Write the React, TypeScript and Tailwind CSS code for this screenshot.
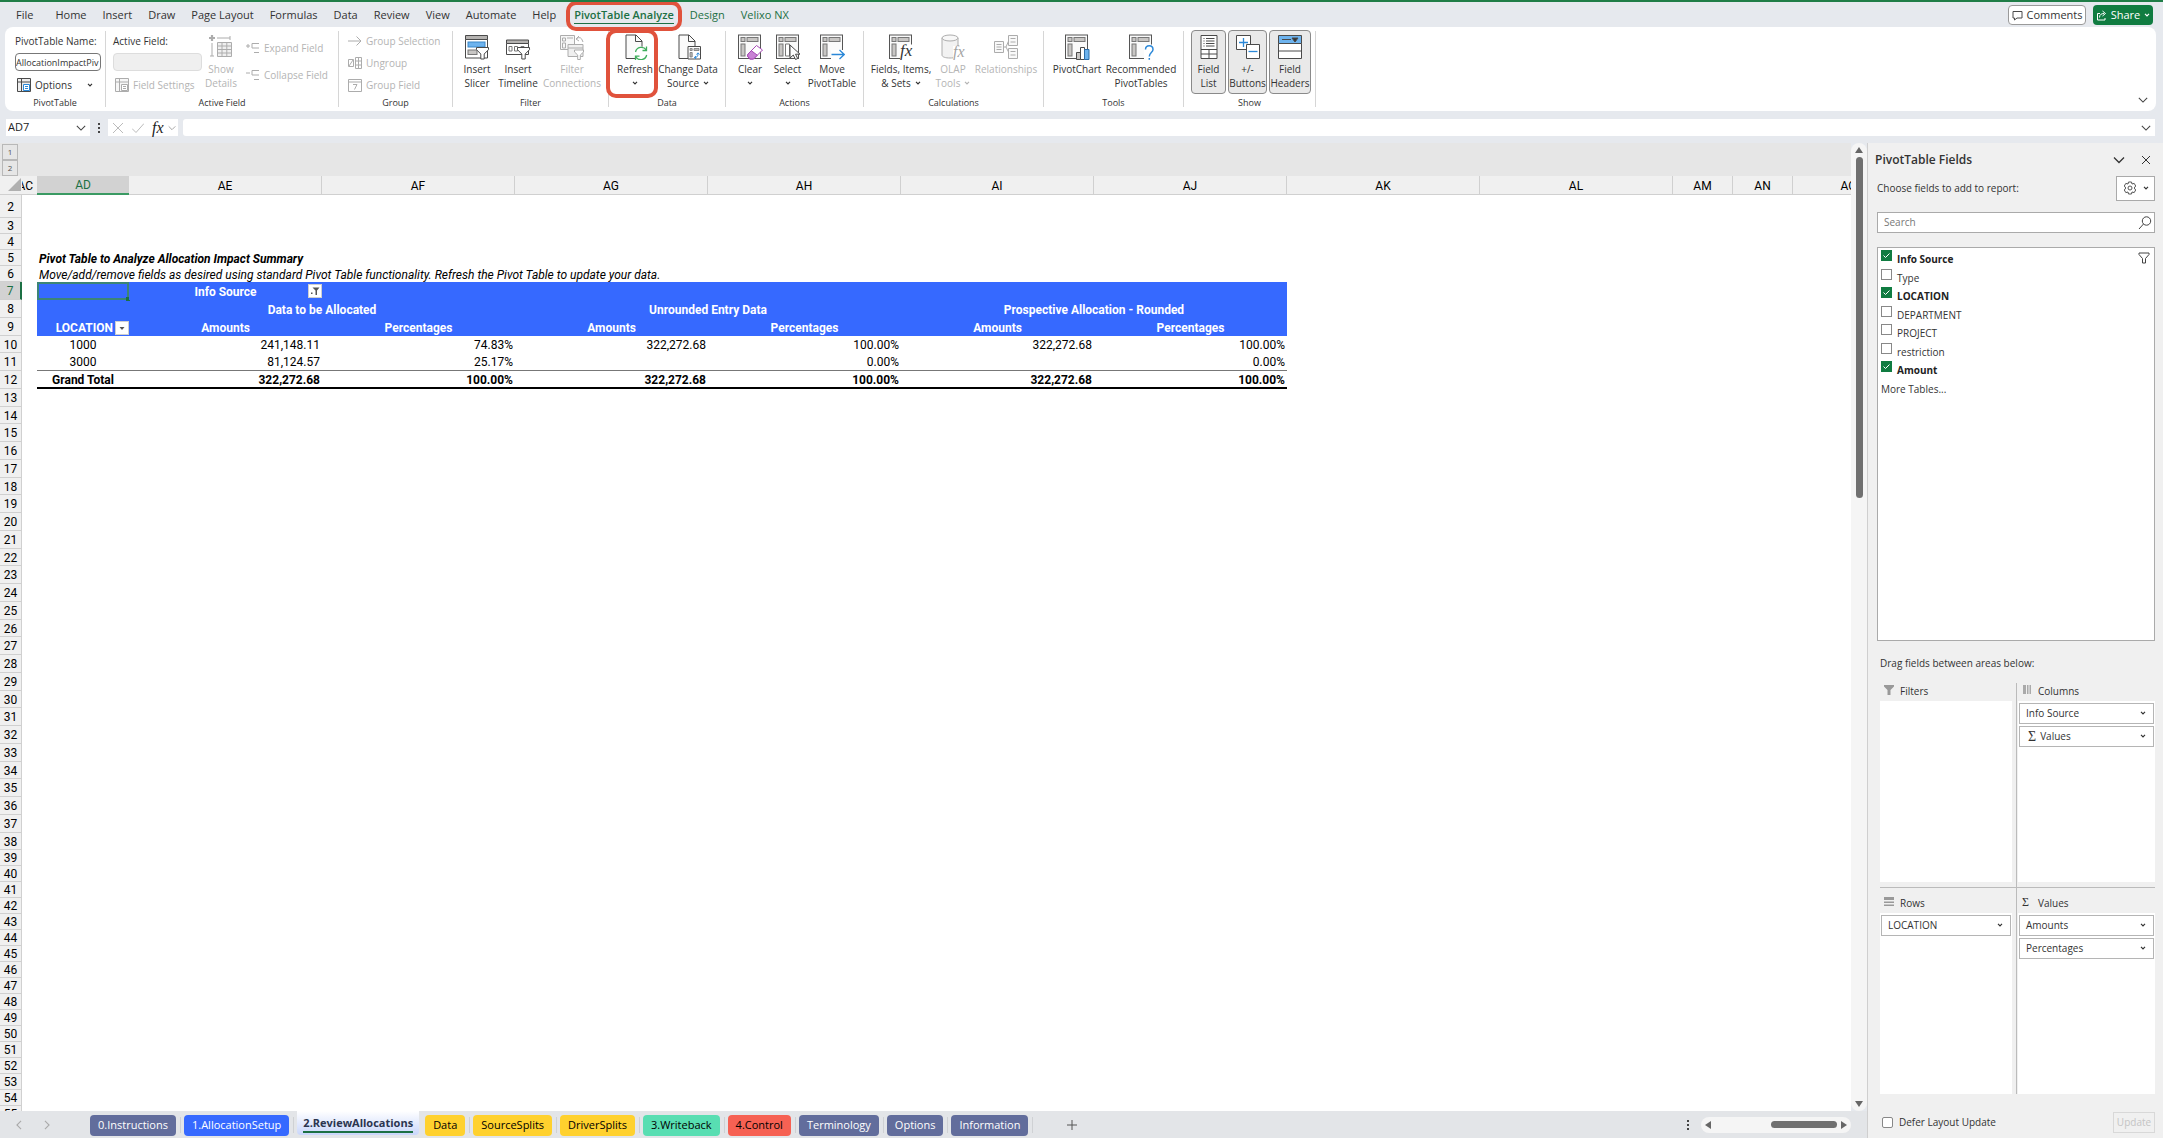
import type { ReactNode } from "react";

const UI = "font-['Open_Sans','Noto_Sans',sans-serif]";
const SHEET = "font-['Roboto','Liberation_Sans',sans-serif]";

function Chevron({ className = "size-2.5" }: { className?: string }) {
  return (
    <svg viewBox="0 0 12 12" className={`shrink-0 ${className}`} fill="none" stroke="currentColor" strokeWidth="1.3" aria-hidden="true">
      <path d="M1 3.5 6 8.5l5-5" />
    </svg>
  );
}

function SmallChevron() {
  return (
    <svg viewBox="0 0 6 4" className="h-1 w-1.5 shrink-0" fill="none" stroke="currentColor" strokeWidth="1.2" aria-hidden="true">
      <path d="M1 .8 3 2.8 5 .8" />
    </svg>
  );
}

function Icon({ children, className = "h-[26px] w-[26px]", box = "0 0 26 26" }: { children: ReactNode; className?: string; box?: string }) {
  return (
    <svg viewBox={box} className={`shrink-0 ${className}`} fill="none" stroke="#4a4a4a" strokeWidth="1" aria-hidden="true">
      {children}
    </svg>
  );
}

const PivotGrid = () => (
  <>
    <rect x="1.5" y="1" width="22" height="23.5" fill="#fafafa" stroke="#555" />
    <rect x="4" y="3.5" width="4" height="4" fill="#c8c6c4" stroke="#777" />
    <rect x="10" y="3.5" width="11" height="4" fill="#c8c6c4" stroke="#777" />
    <rect x="4" y="10" width="4" height="12" fill="#c8c6c4" stroke="#777" />
  </>
);

const Page = () => (
  <>
    <path d="M4 1h10l6 6v17.5H4z" fill="#fafafa" />
    <path d="M13.5 1v6.5H20" />
  </>
);

const Funnel = () => <path d="M12.500 13.500h12v2.200l-4.300 4.300v5h-3.400v-5l-4.300-4.300z" fill="#fff" />;

const Fx = ({ x, y, size = 12, fill = "#333" }: { x: number; y: number; size?: number; fill?: string }) => (
  <text x={x} y={y} fontSize={size} fontStyle="italic" fontFamily="Liberation Serif, serif" fill={fill} stroke="none">
    fx
  </text>
);

const icons: Record<string, ReactNode> = {
  slicer: (
    <Icon>
      <path d="M1.500 1.500h22v4h-22z" fill="#b5b3b1" />
      <path d="M1.500 5.500h22v18.500h-22z" fill="#fff" />
      <rect x="4" y="8" width="17" height="5" fill="#6db3ee" stroke="#3b87c8" />
      <rect x="4" y="16" width="9" height="4.500" fill="#c8c6c4" stroke="#777" />
      <Funnel />
    </Icon>
  ),
  timeline: (
    <Icon>
      <path d="M1.500 6h22v3.500h-22z" fill="#b5b3b1" />
      <path d="M1.500 9.500h22v11h-22z" fill="#fff" />
      <path d="M4 12.500h3v4.500H4zM9.500 12.500h3v4.500h-3zM16 12.500h3v4h-3z" stroke="#777" />
      <Funnel />
    </Icon>
  ),
  connections: (
    <Icon className="h-[26px] w-[26px] opacity-45">
      <path d="M1.500 1.500h14v14h-14z" fill="#eee" />
      <path d="M3.500 4h3v3h-3zM8 4h6M3.500 9h3v5h-3z" />
      <path d="M17 5q5-4 7 3M20 2l-3 3 3 2" />
      <path d="M9 10.500h15v12H9z" fill="#ddd" />
      <path d="M9 14h15" />
      <path d="M15.500 16h9v2l-3.200 3v4.500h-2.600V21l-3.200-3z" fill="#fff" />
    </Icon>
  ),
  refresh: (
    <Icon>
      <Page />
      <circle cx="19" cy="19.500" r="7" fill="#fff" stroke="none" />
      <path d="M13.500 18a6 6 0 0 1 10.800-2M24.500 12.500V16.500h-4M24.700 21a6 6 0 0 1-10.800 2M13.500 26v-3.800h4" stroke="#3fae5c" strokeWidth="1.300" />
    </Icon>
  ),
  source: (
    <Icon>
      <Page />
      <path d="M13 12.500h12.500V25H13z" fill="#fff" />
      <path d="M15 14.500h2.200v2H15zM19 14.500h5v2h-5zM15 18.500h2.200V23H15z" fill="#bbb" stroke="#777" strokeWidth=".8" />
      <path d="M19.500 23.500c2.500 0 3.500-1 3.500-4M21.500 20.500l1.500-1.700 1.500 1.700M21 22l-1.700 1.500 1.700 1.300" stroke="#2b88d8" />
    </Icon>
  ),
  clear: (
    <Icon>
      <PivotGrid />
      <path d="m11 20 8.500-8.500 6 4.500-9 9H12.500L10.500 22z" fill="#fff" stroke="#a646b6" />
      <path d="m11 20 3.300-3.300 6 4.500-3.800 3.800H13L10.500 22z" fill="#c883d4" stroke="#a646b6" />
    </Icon>
  ),
  select: (
    <Icon>
      <PivotGrid />
      <path d="M10.500 10h4v12h-4z" fill="#fff" stroke="#777" />
      <path d="M15 11v13l3.300-3 2.200 4.500 2.200-1-2.200-4.300H25z" fill="#fff" />
    </Icon>
  ),
  move: (
    <Icon>
      <PivotGrid />
      <path d="M12 16h14v9.500H12z" fill="#fff" stroke="none" />
      <path d="M12.500 20.500H25M20.500 16l4.700 4.500-4.700 4.500" stroke="#2b88d8" strokeWidth="1.300" />
    </Icon>
  ),
  fields: (
    <Icon>
      <PivotGrid />
      <path d="M12 10.500h14V26H12z" fill="#fff" stroke="none" />
      <Fx x={12} y={22} size={17} />
    </Icon>
  ),
  olap: (
    <Icon className="h-[26px] w-[26px] opacity-45">
      <path d="M2 4v17c0 2 3.500 3 8 3s8-1 8-3V4" fill="#e3e3e3" />
      <ellipse cx="10" cy="4" rx="8" ry="3" fill="#f0f0f0" />
      <path d="M13 12h13v14H13z" fill="#fff" stroke="none" />
      <Fx x={13} y={23} size={16} />
    </Icon>
  ),
  relations: (
    <Icon className="h-[26px] w-[26px] opacity-45">
      <path d="M10 13h3l3-7M13 13l3 6" />
      <path d="M1.500 7.500h9v11h-9zM15.500 1.500h9v10h-9zM15.500 14.500h9v10h-9z" fill="#f2f2f2" />
      <path d="M3.500 10.500h5M3.500 13h5M3.500 15.500h5M17.500 4.500h5M17.500 8h5M17.500 17.500h5M17.500 21h5" />
    </Icon>
  ),
  chart: (
    <Icon>
      <PivotGrid />
      <path d="M12.500 18.500h4v7h-4z" fill="#c8c6c4" />
      <path d="M16.500 13.500h4v12h-4z" fill="#fff" />
      <path d="M20.500 15.500h4.500v10h-4.500z" fill="#6db3ee" stroke="#2b6ca8" />
    </Icon>
  ),
  recommended: (
    <Icon>
      <PivotGrid />
      <path d="M16 10.500h10V26H16z" fill="#fff" stroke="none" />
      <path d="M17.500 15.500c0-5 7.500-5 7.500 0 0 3-3.700 3.200-3.700 7M21.300 24v1.800" stroke="#2b88d8" strokeWidth="1.500" />
    </Icon>
  ),
  fieldList: (
    <Icon>
      <path d="M5 1.500h16v23H5z" fill="#fff" />
      <path d="M5 15.500h16M5 20h16M13 15.500v9" />
      <path d="M7.500 4.500h1M10 4.500h8.500M7.500 7h1M10 7h8.500M7.500 9.500h1M10 9.500h8.500M7.500 12h1M10 12h8.500" />
    </Icon>
  ),
  plusMinus: (
    <Icon>
      <path d="M1.500 1.500h14v14h-14z" fill="#fff" />
      <path d="M8.500 4v9M4 8.500h9" stroke="#2b88d8" strokeWidth="1.300" />
      <path d="M11.500 10.500h13v14h-13z" fill="#fff" />
      <path d="M13.500 17.500h9" stroke="#2b88d8" strokeWidth="1.300" />
    </Icon>
  ),
  headers: (
    <Icon>
      <path d="M1.500 1.500h23v8h-23z" fill="#6db3ee" />
      <path d="M1.500 9.500h23v15h-23zM1.500 17h23" fill="#fff" />
      <path d="M5 5.500h9" />
      <path d="m15 4 3 4 3-4z" fill="#333" />
    </Icon>
  ),
  details: (
    <Icon className="h-[26px] w-[26px] opacity-45">
      <path d="M4 1v6M1 4h6" strokeWidth="2.200" />
      <path d="M9 4h13M22 2v4M4 9v13M2 22h4" />
      <path d="M9.500 8.500h14v14h-14z" fill="#ddd" />
      <path d="M9.500 12h14M9.500 15.500h14M9.500 19h14M14 8.500v14M18.800 8.500v14" />
    </Icon>
  ),
};

type BigProps = { icon: string; lines: string[]; width: string; disabled?: boolean; drop?: boolean; pressed?: boolean };

function BigButton({ icon, lines, width, disabled, drop, pressed }: BigProps) {
  return (
    <button
      type="button"
      disabled={disabled}
      aria-pressed={pressed}
      className={`flex h-16 shrink-0 flex-col items-center whitespace-nowrap text-[10px] leading-[14px] ${width} ${disabled ? "text-[#b4b4b4]" : "text-[#333]"} ${pressed ? "rounded-[4px] border border-[#8a8a8a] bg-[#e9e9e9] pt-[3px]" : "pt-1"}`}
    >
      {icons[icon]}
      <span className="mt-0.5">{lines[0]}</span>
      <span className="flex h-3.5 items-center gap-1">
        {lines[1]}
        {drop && <SmallChevron />}
      </span>
    </button>
  );
}

function Group({ label, width, children }: { label: string; width: string; children: ReactNode }) {
  return (
    <section aria-label={label} className={`my-1 flex shrink-0 flex-col border-r border-[#d6d6d6] ${width}`}>
      <div className="-mt-px flex h-[68px] shrink-0 items-start">{children}</div>
      <h2 className="text-center text-[9px] leading-[10px] text-[#333]">{label}</h2>
    </section>
  );
}

function SmallButton({ icon, children }: { icon: ReactNode; children: ReactNode }) {
  return (
    <button type="button" disabled className="flex h-[22px] items-center gap-1 text-[10px] whitespace-nowrap text-[#b4b4b4]">
      {icon}
      {children}
    </button>
  );
}

const settingsIcon = (faded: boolean) => (
  <Icon box="0 0 14 14" className={faded ? "size-3.5 opacity-45" : "size-3.5"}>
    <path d="M.5.5h13v13H.5z" fill="#eee" />
    <path d="M.5 4h13M4.500.5v13" />
    <path d="M6.500 6.500h6v6h-6z" fill="#fff" stroke={faded ? "#4a4a4a" : "#2b88d8"} />
    <path d="M8 8.500h3M8 10.500h3" stroke={faded ? "#4a4a4a" : "#2b88d8"} />
  </Icon>
);

const outlineIcon = (plus: boolean) => (
  <Icon box="0 0 14 12" className="h-3 w-3.5 opacity-45">
    <path d={plus ? "M0 4h4M2 2v4" : "M0 4h4"} />
    <path d="M6 1.500h7M8 6h5M8 10.500h5M6 1.500v4.500h2" />
  </Icon>
);

const menus = ["Home", "Insert", "Draw", "Page Layout", "Formulas", "Data", "Review", "View", "Automate", "Help"];

function MenuBar() {
  return (
    <nav aria-label="Ribbon tabs" className="flex h-[25px] items-center pt-px pr-2.5 pl-4 text-[11px] text-[#333]">
      <button type="button" className="mr-[22px]">File</button>
      <div className="flex gap-4">
        {menus.map((m) => (
          <button key={m} type="button" className="whitespace-nowrap">
            {m}
          </button>
        ))}
        <button type="button" className="relative ml-0.5 font-semibold whitespace-nowrap text-[#1c7044]">
          PivotTable Analyze
          <span className="absolute inset-x-0 -bottom-px h-px bg-[#1c7044]" />
          <span className="absolute -inset-x-2 -top-1.5 -bottom-2 z-10 rounded-[10px] border-4 border-[#e0523c]" />
        </button>
        <button type="button" className="text-[#1c7044]">Design</button>
        <button type="button" className="whitespace-nowrap text-[#1c7044]">Velixo NX</button>
      </div>
      <button type="button" className="ml-auto flex h-5 w-[78px] items-center justify-center gap-1 rounded-[4px] border border-[#9a9a9a] bg-white">
        <Icon box="0 0 11 11" className="size-[11px]">
          <path d="M1 1.500h9v6.500H5L2.500 10V8H1z" />
        </Icon>
        Comments
      </button>
      <button type="button" className="ml-[7px] flex h-5 w-[60px] items-center justify-center gap-1 rounded-[4px] bg-[#107c41] text-white">
        <svg viewBox="0 0 11 11" className="size-[11px]" fill="none" stroke="currentColor" aria-hidden="true">
          <path d="M4 3.500H1.500v6.500h7.500V8M3.500 7.500c0-3 2-4 4.500-4M6.500 1l3 2.500-3 2.500" />
        </svg>
        Share
        <SmallChevron />
      </button>
    </nav>
  );
}

function Ribbon() {
  return (
    <div className="mr-[7px] ml-[5px] flex h-[84px] rounded-lg bg-white">
      <Group label="PivotTable" width="w-[101px]">
        <div className="flex w-24 flex-col pl-2.5 text-[10px] text-[#333]">
          <label htmlFor="pt-name" className="mt-1 h-[19px] leading-[15px] whitespace-nowrap">PivotTable Name:</label>
          <input id="pt-name" defaultValue="AllocationImpactPiv" className="h-[18px] w-[86px] rounded-[4px] border border-[#777] bg-white text-[9px]" />
          <button type="button" className="mt-1 flex h-5 items-center gap-1 pl-0.5">
            {settingsIcon(false)}
            Options
            <span className="ml-auto pr-2"><SmallChevron /></span>
          </button>
        </div>
      </Group>
      <Group label="Active Field" width="w-[233px]">
        <div className="flex w-24 flex-col pl-[7px] text-[10px] text-[#333]">
          <label htmlFor="active-field" className="mt-1 h-[19px] leading-[15px]">Active Field:</label>
          <input id="active-field" disabled className="h-[18px] w-[89px] rounded-[4px] border border-[#ddd] bg-[#efefef]" />
          <div className="mt-[3px] pl-0.5">
            <SmallButton icon={settingsIcon(true)}>Field Settings</SmallButton>
          </div>
        </div>
        <BigButton icon="details" lines={["Show", "Details"]} width="w-[38px]" disabled />
        <div className="flex flex-col gap-[5px] pt-[7px] pl-1.5">
          <SmallButton icon={outlineIcon(true)}>Expand Field</SmallButton>
          <SmallButton icon={outlineIcon(false)}>Collapse Field</SmallButton>
        </div>
      </Group>
      <Group label="Group" width="w-[114px]">
        <div className="flex flex-col pl-[9px]">
          <SmallButton icon={<Icon box="0 0 14 14" className="size-3.5 opacity-45"><path d="M0 7h13M8.500 2.500 13 7l-4.500 4.500" /></Icon>}>Group Selection</SmallButton>
          <SmallButton icon={<Icon box="0 0 14 14" className="size-3.5 opacity-45"><path d="M.5 3.500h5v7h-5zM7.500 1.500h6v11h-6zM7.500 5h6M7.500 9h6M10.500 1.500v11M1 10l4-6" /></Icon>}>Ungroup</SmallButton>
          <SmallButton icon={<Icon box="0 0 14 14" className="size-3.5 opacity-45"><path d="M.5 1.500h13v12H.5zM.5 4h13" /><path d="M5 6.500h4L6.500 11.500" /></Icon>}>Group Field</SmallButton>
        </div>
      </Group>
      <Group label="Filter" width="w-[156px]">
        <div className="flex pl-[3px]">
          <BigButton icon="slicer" lines={["Insert", "Slicer"]} width="w-[42px]" />
          <BigButton icon="timeline" lines={["Insert", "Timeline"]} width="w-[40px]" />
          <BigButton icon="connections" lines={["Filter", "Connections"]} width="w-[68px]" disabled />
        </div>
      </Group>
      <Group label="Data" width="w-[117px]">
        <div className="flex pl-1.5">
          <div className="relative">
            <BigButton icon="refresh" lines={["Refresh", ""]} width="w-[40px]" drop />
            <span className="pointer-events-none absolute -top-px -right-[3px] -bottom-1 -left-[9px] z-10 rounded-[10px] border-4 border-[#e0523c]" />
          </div>
          <BigButton icon="source" lines={["Change Data", "Source"]} width="w-[66px]" drop />
        </div>
      </Group>
      <Group label="Actions" width="w-[138px]">
        <div className="flex pl-1.5">
          <BigButton icon="clear" lines={["Clear", ""]} width="w-[36px]" drop />
          <BigButton icon="select" lines={["Select", ""]} width="w-[39px]" drop />
          <BigButton icon="move" lines={["Move", "PivotTable"]} width="w-[50px]" />
        </div>
      </Group>
      <Group label="Calculations" width="w-[180px]">
        <div className="flex pl-[5px]">
          <BigButton icon="fields" lines={["Fields, Items,", "& Sets"]} width="w-[64px]" drop />
          <BigButton icon="olap" lines={["OLAP", "Tools"]} width="w-[40px]" disabled drop />
          <BigButton icon="relations" lines={["Relationships", ""]} width="w-[66px]" disabled />
        </div>
      </Group>
      <Group label="Tools" width="w-[140px]">
        <div className="flex pl-[9px]">
          <BigButton icon="chart" lines={["PivotChart", ""]} width="w-[48px]" />
          <BigButton icon="recommended" lines={["Recommended", "PivotTables"]} width="w-[80px]" />
        </div>
      </Group>
      <Group label="Show" width="w-[132px]">
        <div className="flex gap-0.5 pl-[7px]">
          <BigButton icon="fieldList" lines={["Field", "List"]} width="w-[35px]" pressed />
          <BigButton icon="plusMinus" lines={["+/-", "Buttons"]} width="w-[39px]" pressed />
          <BigButton icon="headers" lines={["Field", "Headers"]} width="w-[42px]" pressed />
        </div>
      </Group>
      <button type="button" aria-label="Collapse ribbon" className="mt-auto mr-2 mb-1.5 ml-auto text-[#444]">
        <Chevron />
      </button>
    </div>
  );
}

function Dots() {
  return (
    <span className="flex flex-col gap-0.5" aria-hidden="true">
      <i className="size-0.5 bg-[#444]" />
      <i className="size-0.5 bg-[#444]" />
      <i className="size-0.5 bg-[#444]" />
    </span>
  );
}

function FormulaBar() {
  return (
    <div className="mt-2 mb-[7px] flex h-[17px] items-center pr-2 pl-1.5 text-[#444]">
      <div className="flex h-full w-[84px] items-center bg-white pr-1">
        <input aria-label="Name box" defaultValue="AD7" className="w-16 px-0.5 text-[11px] text-[#222]" />
        <Chevron className="ml-auto size-2.5" />
      </div>
      <span className="flex w-[18px] justify-center"><Dots /></span>
      <div className="flex h-full w-[70px] items-center gap-2 bg-white px-1 text-[#bbb]">
        <svg viewBox="0 0 12 12" className="size-3 shrink-0" fill="none" stroke="currentColor" aria-hidden="true"><path d="m1 1 10 10M11 1 1 11" /></svg>
        <svg viewBox="0 0 12 12" className="size-3 shrink-0" fill="none" stroke="currentColor" aria-hidden="true"><path d="m0 6.500 4 4 8-9" /></svg>
        <span className="flex items-center gap-1 font-['Liberation_Serif',serif] text-[16px] leading-4 text-[#222] italic">
          fx
          <Chevron className="size-2 text-[#999]" />
        </span>
      </div>
      <input aria-label="Formula bar" className="ml-[5px] h-full min-w-0 flex-1 rounded-l-[3px] bg-white" />
      <button type="button" aria-label="Expand formula bar" className="flex h-full w-3.5 items-center bg-white"><Chevron /></button>
    </div>
  );
}

const columns = ["AC", "AD", "AE", "AF", "AG", "AH", "AI", "AJ", "AK", "AL", "AM", "AN", "AO"];

function rowHeight(n: number) {
  if (n === 2) return "h-[23px]";
  if (n < 7 || n > 38) return "h-4";
  return n % 4 === 2 ? "h-[17px]" : "h-[18px]";
}

function FilterButton({ filtered }: { filtered?: boolean }) {
  return (
    <button type="button" aria-label="Filter" className="flex size-3.5 shrink-0 items-center justify-center border border-[#cfcfcf] bg-white">
      <svg viewBox="0 0 10 10" className="size-2.5" fill="#555" aria-hidden="true">
        {filtered ? <path d="M2.500 1.500H9.500L7 4.500V9H5.500V4.500zM1 6.500h1.500V8H1z" /> : <path d="M2.500 4h5L5 7z" />}
      </svg>
    </button>
  );
}

const blue = "bg-[#3669ff] font-bold text-white text-center pt-0.5";
const measures = ["Amounts", "Percentages", "Amounts", "Percentages", "Amounts", "Percentages"];

const dataRows: Record<number, string[]> = {
  10: ["1000", "241,148.11", "74.83%", "322,272.68", "100.00%", "322,272.68", "100.00%"],
  11: ["3000", "81,124.57", "25.17%", "", "0.00%", "", "0.00%"],
  12: ["Grand Total", "322,272.68", "100.00%", "322,272.68", "100.00%", "322,272.68", "100.00%"],
};

function rowCells(n: number): ReactNode {
  if (n === 5)
    return (
      <>
        <td />
        <td colSpan={12} className="pt-0.5 pl-0.5 font-bold italic">Pivot Table to Analyze Allocation Impact Summary</td>
      </>
    );
  if (n === 6)
    return (
      <>
        <td />
        <td colSpan={12} className="pt-0.5 pl-0.5 italic">
          Move/add/remove fields as desired using standard Pivot Table functionality. Refresh the Pivot Table to update your data.
        </td>
      </>
    );
  if (n === 7)
    return (
      <>
        <td />
        <td className="relative bg-[#3669ff]">
          <span className="absolute inset-0 border-2 border-[#3c8576]" />
          <span className="absolute -right-px -bottom-px size-1 bg-[#1c7044]" />
        </td>
        <td className={`relative ${blue}`}>
          Info Source
          <span className="absolute top-0.5 right-0"><FilterButton filtered /></span>
        </td>
        <td colSpan={5} className={blue} />
        <td colSpan={5} />
      </>
    );
  if (n === 8)
    return (
      <>
        <td />
        <td className={blue} />
        <td colSpan={2} className={blue}>Data to be Allocated</td>
        <td colSpan={2} className={blue}>Unrounded Entry Data</td>
        <td colSpan={2} className={blue}>Prospective Allocation - Rounded</td>
        <td colSpan={5} />
      </>
    );
  if (n === 9)
    return (
      <>
        <td />
        <td className={blue}>
          <span className="flex h-4 items-center justify-end gap-0.5">
            LOCATION
            <FilterButton />
          </span>
        </td>
        {measures.map((a, i) => (
          <td key={i} className={blue}>{a}</td>
        ))}
        <td colSpan={5} />
      </>
    );
  const data = dataRows[n];
  if (data)
    return (
      <>
        <td />
        {data.map((v, i) => (
          <td
            key={i}
            className={`pt-0.5 ${i === 0 ? "text-center" : "pr-0.5 text-right"} ${n === 11 ? "border-b border-[#777]" : ""} ${n === 12 ? "border-b-2 border-black font-bold" : ""}`}
          >
            {v}
          </td>
        ))}
        <td colSpan={5} />
      </>
    );
  return <td colSpan={13} />;
}

function Sheet() {
  const rows = Array.from({ length: 54 }, (_, i) => i + 2);
  return (
    <div className={`min-h-0 flex-1 overflow-hidden bg-white text-[12px] leading-[13px] text-black ${SHEET}`}>
      <table className="w-[1905px] table-fixed border-separate border-spacing-0 whitespace-nowrap">
        <colgroup>
          <col className="w-[22px]" />
          <col className="w-[15px]" />
          <col className="w-[92px]" />
          {columns.slice(2, 10).map((c) => (
            <col key={c} className="w-[193px]" />
          ))}
          <col className="w-[60px]" />
          <col className="w-[60px]" />
          <col className="w-[112px]" />
        </colgroup>
        <thead>
          <tr className="h-[19px]">
            <th className="border-b border-[#d0d0d0] bg-[#f0f0f0]">
              <svg viewBox="0 0 14 14" className="ml-auto size-3.5" aria-hidden="true"><path d="M13 0v13H0z" fill="#b0b0b0" /></svg>
            </th>
            {columns.map((c) => (
              <th
                key={c}
                scope="col"
                className={`overflow-hidden pt-0.5 font-normal ${c === "AD" ? "border-b-2 border-[#3a9a63] bg-[#d2d2d2] text-[#1c7044]" : "border-b border-[#d0d0d0] bg-[#f0f0f0]"} ${c === "AC" || c === "AD" ? "" : "border-r"}`}
              >
                {c === "AC" ? <span className="flex justify-end pr-1">AC</span> : c}
              </th>
            ))}
          </tr>
        </thead>
        <tbody>
          {rows.map((n) => (
            <tr key={n} className={rowHeight(n)}>
              <th
                scope="row"
                className={`border-b border-b-[#d0d0d0] pt-0.5 font-normal ${n === 7 ? "border-r-2 border-r-[#1c7044] bg-[#d2d2d2] text-[#1c7044]" : "border-r border-r-[#d0d0d0] bg-[#f0f0f0]"}`}
              >
                {n}
              </th>
              {rowCells(n)}
            </tr>
          ))}
        </tbody>
      </table>
    </div>
  );
}

const tabs: [string, string][] = [
  ["0.Instructions", "bg-[#626d9c] text-white"],
  ["1.AllocationSetup", "bg-[#3669ff] text-white"],
  ["2.ReviewAllocations", "active"],
  ["Data", "bg-[#ffd12e] text-black"],
  ["SourceSplits", "bg-[#ffd12e] text-black"],
  ["DriverSplits", "bg-[#ffd12e] text-black"],
  ["3.Writeback", "bg-[#58deb2] text-black"],
  ["4.Control", "bg-[#f66153] text-black"],
  ["Terminology", "bg-[#626d9c] text-white"],
  ["Options", "bg-[#626d9c] text-white"],
  ["Information", "bg-[#626d9c] text-white"],
];

function SheetTabs() {
  return (
    <div className="flex h-[27px] items-center bg-[#e3e5e8] text-[#777]">
      <button type="button" aria-label="Previous sheets" className="ml-3.5"><Chevron className="size-2.5 rotate-90 text-[#aaa]" /></button>
      <button type="button" aria-label="Next sheets" className="ml-[18px]"><Chevron className="size-2.5 -rotate-90 text-[#aaa]" /></button>
      <div className="ml-[38px] flex h-full items-center">
        {tabs.map(([name, tone]) =>
          tone === "active" ? (
            <button key={name} type="button" aria-current="page" className="mr-1.5 flex h-6 items-center self-start rounded-b bg-linear-to-b from-white to-[#c9d6fb] px-1.5 text-[11px] leading-[17px] font-bold text-[#2b3550]">
              <span className="border-b-2 border-[#1c7044]">{name}</span>
            </button>
          ) : (
            <span key={name} className="flex items-center pt-px">
              <button type="button" className={`h-[21px] rounded-[4px] px-2 text-[11px] ${tone}`}>{name}</button>
              <span className="mx-[3px] h-4 w-0.5 border-r border-[#cfd1d4]" />
            </span>
          ),
        )}
      </div>
      <button type="button" aria-label="New sheet" className="ml-[31px]">
        <svg viewBox="0 0 10 10" className="size-2.5" fill="none" stroke="#555" aria-hidden="true"><path d="M5 0v10M0 5h10" /></svg>
      </button>
      <span className="mr-3 ml-auto"><Dots /></span>
      <div className="mr-4 flex h-4 w-[150px] items-center rounded-full bg-[#f5f5f5] px-1" aria-hidden="true">
        <svg viewBox="0 0 6 8" className="h-2 w-1.5" fill="#666"><path d="M6 0v8L0 4z" /></svg>
        <span className="mr-1 ml-auto h-[7px] w-[66px] rounded-full bg-[#707070]" />
        <svg viewBox="0 0 6 8" className="h-2 w-1.5" fill="#666"><path d="M0 0v8l6-4z" /></svg>
      </div>
    </div>
  );
}

function Chip({ children }: { children: ReactNode }) {
  return (
    <button type="button" className="flex h-[21px] w-full items-center border border-[#b5b5b5] bg-white pr-[7px] pl-1.5 text-left">
      {children}
      <span className="ml-auto"><SmallChevron /></span>
    </button>
  );
}

function Area({ title, icon, children, className }: { title: string; icon: ReactNode; children?: ReactNode; className: string }) {
  return (
    <section className={`flex flex-col ${className}`}>
      <h3 className="flex h-[18px] items-start gap-1 pl-1 leading-4">
        <span className="flex h-3.5 w-3 items-center">{icon}</span>
        {title}
      </h3>
      <div className="flex flex-1 flex-col gap-0.5 bg-white p-px pt-0.5">{children}</div>
    </section>
  );
}

const fields: [string, boolean][] = [
  ["Info Source", true],
  ["Type", false],
  ["LOCATION", true],
  ["DEPARTMENT", false],
  ["PROJECT", false],
  ["restriction", false],
  ["Amount", true],
];

function Tick({ id, checked }: { id: string; checked?: boolean }) {
  return (
    <span className="relative size-[11px] shrink-0">
      <input
        id={id}
        type="checkbox"
        defaultChecked={checked}
        className="block size-[11px] appearance-none border border-[#888] bg-white checked:border-[#107c41] checked:bg-[#107c41]"
      />
      {checked && (
        <svg viewBox="0 0 11 11" className="pointer-events-none absolute inset-0" fill="none" stroke="#fff" aria-hidden="true">
          <path d="m2.500 5.500 2 2 4-4" />
        </svg>
      )}
    </span>
  );
}

function FieldsPane() {
  return (
    <aside className="flex w-[296px] shrink-0 flex-col border-l border-[#cfcfcf] bg-[#f0f0f0] pr-2 pl-[9px] text-[10px] text-[#333]">
      <div className="mt-2 flex h-[18px] items-center">
        <h2 className="-ml-0.5 text-[12px] font-semibold">PivotTable Fields</h2>
        <button type="button" aria-label="Pane options" className="ml-auto"><Chevron className="size-3" /></button>
        <button type="button" aria-label="Close pane" className="mr-1 ml-4">
          <svg viewBox="0 0 10 10" className="size-2.5" fill="none" stroke="currentColor" aria-hidden="true"><path d="m1 1 8 8M9 1 1 9" /></svg>
        </button>
      </div>
      <div className="mt-[7px] flex h-6 items-center">
        <span>Choose fields to add to report:</span>
        <button type="button" aria-label="Tools" className="ml-auto flex h-[25px] w-[39px] items-center justify-center gap-1.5 border border-[#aaa] bg-white">
          <svg viewBox="0 0 14 14" className="size-3.5" fill="none" stroke="#555" aria-hidden="true">
            <path d="M5.500 1h3l.5 2 2.200-.6 1.500 2.600L11.200 7l1.500 2-1.500 2.600L9 11l-.5 2h-3L5 11l-2.200.6L1.300 9l1.500-2-1.500-2 1.500-2.600L5 3z" />
            <circle cx="7" cy="7" r="2" />
          </svg>
          <SmallChevron />
        </button>
      </div>
      <div className="mt-3 flex h-[21px] items-center border border-[#aaa] bg-white pr-0.5">
        <input aria-label="Search fields" placeholder="Search" className="min-w-0 flex-1 px-1.5 placeholder:text-[#777]" />
        <svg viewBox="0 0 14 14" className="size-3.5" fill="none" stroke="#444" aria-hidden="true"><circle cx="8.500" cy="5" r="4.200" /><path d="M5.500 8 1 13" /></svg>
      </div>
      <div className="relative mt-3.5 min-h-0 flex-[392] border border-[#aaa] bg-white pl-[3px]">
        <ul className="grid h-[131px] grid-rows-7 pt-px">
          {fields.map(([name, on]) => (
            <li key={name} className="flex items-start">
              <span className="pt-px"><Tick id={name} checked={on} /></span>
              <label htmlFor={name} className={`mt-0.5 ml-[5px] leading-4 ${on ? "font-bold text-[#222]" : ""}`}>{name}</label>
            </li>
          ))}
        </ul>
        <a href="#more" className="block leading-5">More Tables...</a>
        <button type="button" aria-label="Filter fields" className="absolute top-1 right-1">
          <svg viewBox="0 0 12 12" className="size-3" fill="none" stroke="#444" aria-hidden="true"><path d="M1 1h10v1.500L7.500 6.500V11h-3V6.500L1 2.500z" /></svg>
        </button>
      </div>
      <p className="mt-3.5 mb-3 pl-[3px] leading-4">Drag fields between areas below:</p>
      <div className="ml-[3px] grid min-h-0 flex-[412] grid-cols-[137fr_138fr] grid-rows-[205fr_206fr]">
        <Area title="Filters" className="border-r border-b border-[#bbb] pr-1 pb-[5px]" icon={<Icon box="0 0 10 10" className="size-2.5"><path d="M0 0h10v1.500L6.500 5v5h-3V5L0 1.500z" fill="#999" stroke="none" /></Icon>} />
        <Area
          title="Columns"
          className="border-b border-[#bbb] pb-[5px] pl-px"
          icon={<Icon box="0 0 10 10" className="size-2.5"><path d="M1 0h3v9H1zM5 0h1.500v9H5zM7.500 0H9v9H7.500z" fill="#aaa" stroke="none" /></Icon>}
        >
          <Chip>Info Source</Chip>
          <Chip>
            <span className="pr-1 pl-0.5 font-['Liberation_Serif',serif] text-[14px]">Σ</span>Values
          </Chip>
        </Area>
        <Area title="Rows" className="border-r border-[#bbb] pt-[7px] pr-1" icon={<Icon box="0 0 10 10" className="size-2.5"><path d="M0 0h10v3H0zM0 4.500h10V6H0zM0 7.500h10V9H0z" fill="#999" stroke="none" /></Icon>}>
          <Chip>LOCATION</Chip>
        </Area>
        <Area title="Values" className="pt-[7px] pl-px" icon={<span className="font-['Liberation_Serif',serif] text-[12px]">Σ</span>}>
          <Chip>Amounts</Chip>
          <Chip>Percentages</Chip>
        </Area>
      </div>
      <div className="mt-[18px] mb-[5px] ml-[5px] flex h-[21px] items-center gap-1.5">
        <input id="defer" type="checkbox" className="size-[11px] appearance-none rounded-[2px] border border-[#888] bg-white" />
        <label htmlFor="defer">Defer Layout Update</label>
        <button type="button" disabled className="ml-auto h-[21px] w-[42px] border border-[#d8d8d8] text-[#c4c4c4]">Update</button>
      </div>
    </aside>
  );
}

export default function App() {
  return (
    <div className={`flex h-screen flex-col overflow-hidden border-t-2 border-[#1f7d47] bg-[#e6e9ee] ${UI}`}>
      <MenuBar />
      <Ribbon />
      <FormulaBar />
      <main className="flex min-h-0 flex-1">
        <div className="flex min-w-0 flex-1 flex-col">
          <div className="flex min-h-0 flex-1">
            <div className="flex min-w-0 flex-1 flex-col">
              <div className="flex h-[33px] shrink-0 flex-col bg-[#e6e6e6] pt-px pl-0.5 text-[8px] text-[#555]">
                <button type="button" className="h-4 w-4 border border-[#b8b8b8]">1</button>
                <button type="button" className="h-4 w-4 border border-[#b8b8b8]">2</button>
              </div>
              <Sheet />
            </div>
            <div className="flex w-4 shrink-0 flex-col items-center rounded-full bg-[#f5f5f5] py-1" aria-hidden="true">
              <svg viewBox="0 0 8 6" className="h-1.5 w-2" fill="#666"><path d="M0 6h8L4 0z" /></svg>
              <span className="mt-1 h-[341px] w-[7px] rounded-full bg-[#707070]" />
              <svg viewBox="0 0 8 6" className="mt-auto h-1.5 w-2" fill="#666"><path d="M0 0h8L4 6z" /></svg>
            </div>
          </div>
          <SheetTabs />
        </div>
        <FieldsPane />
      </main>
    </div>
  );
}
